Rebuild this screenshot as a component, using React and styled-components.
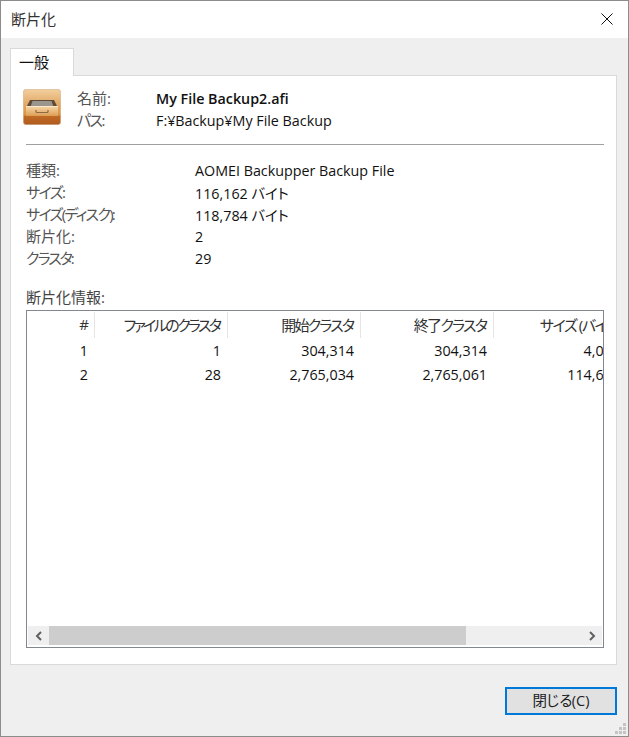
import React from "react";
import styled, { createGlobalStyle } from "styled-components";

const columns = [
  { title: "#", width: 68, tracking: 0 },
  { title: "ファイルのクラスタ", width: 133, tracking: -2.6 },
  { title: "開始クラスタ", width: 133, tracking: -1.8 },
  { title: "終了クラスタ", width: 133, tracking: -1.7 },
  { title: "サイズ (バイト)", width: 133, tracking: -1.4 },
];

const rows = [
  ["1", "1", "304,314", "304,314", "4,096"],
  ["2", "28", "2,765,034", "2,765,061", "114,688"],
];

const details = [
  { label: "種類:", value: "AOMEI Backupper Backup File", tracking: 0 },
  { label: "サイズ:", value: "116,162 バイト", tracking: -1.6 },
  { label: "サイズ(ディスク):", value: "118,784 バイト", tracking: -1.7 },
  { label: "断片化:", value: "2", tracking: 0 },
  { label: "クラスタ:", value: "29", tracking: -2 },
];

const DrawerIcon = () => (
  <IconBox width="38" height="36" viewBox="0 0 38 36">
    <defs>
      <linearGradient id="body" x1="0" y1="0" x2="0" y2="1">
        <stop offset="0" stopColor="#f2cf9f" />
        <stop offset="0.4" stopColor="#e3aa68" />
        <stop offset="0.72" stopColor="#d99344" />
        <stop offset="0.76" stopColor="#c06a26" />
        <stop offset="1" stopColor="#b05a1e" />
      </linearGradient>
      <linearGradient id="front" x1="0" y1="0" x2="0" y2="1">
        <stop offset="0" stopColor="#f7d8a8" />
        <stop offset="1" stopColor="#dd9d54" />
      </linearGradient>
    </defs>
    <rect x="0.3" y="0.3" width="37.4" height="35.4" rx="3" fill="url(#body)" stroke="#cdb08d" strokeWidth="0.6" />
    <path d="M7 11h24l3.5 7h-31z" fill="#5f4a36" />
    <path d="M9.5 12h19l2 6h-23z" fill="#9b968d" />
    <rect x="3" y="17" width="32" height="10" fill="url(#front)" />
    <rect x="3" y="17" width="32" height="1" fill="#fbe8ca" />
    <path d="M13 21v1.5a1 1 0 0 0 1 1h10a1 1 0 0 0 1-1V21" fill="none" stroke="#8d6a45" strokeWidth="1.2" />
  </IconBox>
);

const App = () => (
  <>
    <GlobalStyle />
    <Window>
      <TitleBar>
        <Title>断片化</Title>
        <CloseIcon width="12" height="12" viewBox="0 0 12 12">
          <path d="M0.5 0.5l11 11M11.5 0.5l-11 11" stroke="#111" strokeWidth="1" fill="none" />
        </CloseIcon>
      </TitleBar>
      <Client>
        <Tabs>
          <Tab>一般</Tab>
        </Tabs>
        <Panel>
          <FileHeader>
            <DrawerIcon />
            <FileInfo>
              <FileRow>
                <FileLabel>名前:</FileLabel>
                <FileName>My File Backup2.afi</FileName>
              </FileRow>
              <FileRow>
                <FileLabel $tracking={-1.6}>パス:</FileLabel>
                <span>F:¥Backup¥My File Backup</span>
              </FileRow>
            </FileInfo>
          </FileHeader>
          <Divider />
          <Details>
            {details.map((d) => (
              <DetailRow key={d.label}>
                <DetailLabel $tracking={d.tracking}>{d.label}</DetailLabel>
                <span>{d.value}</span>
              </DetailRow>
            ))}
          </Details>
          <SectionLabel>断片化情報:</SectionLabel>
          <ListView>
            <ListBody>
              <HeaderRow>
                {columns.map((c) => (
                  <HeaderCell key={c.title} $width={c.width} $tracking={c.tracking}>
                    {c.title}
                  </HeaderCell>
                ))}
              </HeaderRow>
              {rows.map((row) => (
                <DataRow key={row[0]}>
                  {row.map((v, i) => (
                    <DataCell key={i} $width={columns[i].width}>
                      {v}
                    </DataCell>
                  ))}
                </DataRow>
              ))}
            </ListBody>
            <ScrollBar>
              <ScrollButton>
                <svg width="8" height="10" viewBox="0 0 8 10">
                  <path d="M6 1L2 5l4 4" fill="none" stroke="#606060" strokeWidth="2" />
                </svg>
              </ScrollButton>
              <ScrollTrack>
                <ScrollThumb />
              </ScrollTrack>
              <ScrollButton>
                <svg width="8" height="10" viewBox="0 0 8 10">
                  <path d="M2 1l4 4-4 4" fill="none" stroke="#606060" strokeWidth="2" />
                </svg>
              </ScrollButton>
            </ScrollBar>
          </ListView>
        </Panel>
        <Footer>
          <CloseButton>
            <ButtonKana>閉じる</ButtonKana>(C)
          </CloseButton>
        </Footer>
      </Client>
      <Grip width="12" height="12" viewBox="0 0 12 12">
        <path d="M8 0h3v3H8zM4 4h3v3H4zM8 4h3v3H8zM0 8h3v3H0zM4 8h3v3H4zM8 8h3v3H8z" fill="#c4c4c4" />
      </Grip>
    </Window>
  </>
);

const GlobalStyle = createGlobalStyle`
  html, body {
    margin: 0;
    padding: 0;
    background: #efefef;
  }
  * {
    box-sizing: border-box;
  }
`;

const Window = styled.div`
  position: relative;
  width: 629px;
  height: 737px;
  display: flex;
  flex-direction: column;
  border: 1px solid #8c8c8c;
  background: #efefef;
  color: #111;
  font-family: "Open Sans", "Noto Sans CJK JP", sans-serif;
  font-size: 14.3px;
  font-feature-settings: "palt";
`;

const TitleBar = styled.div`
  height: 37px;
  flex: none;
  display: flex;
  align-items: center;
  justify-content: space-between;
  padding: 0 15px 1px 10px;
  background: #fff;
`;

const Title = styled.span`
  font-size: 15px;
  color: #333;
  padding-bottom: 2px;
  font-feature-settings: normal;
`;

const CloseIcon = styled.svg`
  display: block;
`;

const Client = styled.div`
  flex: 1;
  display: flex;
  flex-direction: column;
  padding: 10px 11px 0 9px;
`;

const Tabs = styled.div`
  display: flex;
  height: 27px;
  flex: none;
`;

const Tab = styled.div`
  width: 64px;
  height: 28px;
  padding: 2px 0 0 8px;
  background: #fff;
  border: 1px solid #d9d9d9;
  border-bottom: none;
  position: relative;
  z-index: 1;
  font-size: 15px;
  font-feature-settings: normal;
`;

const Panel = styled.div`
  height: 590px;
  flex: none;
  padding: 12px 12px 15px 12px;
  display: flex;
  flex-direction: column;
  background: #fff;
  border: 1px solid #d9d9d9;
`;

const FileHeader = styled.div`
  display: flex;
  align-items: flex-start;
  height: 43px;
  flex: none;
  gap: 16px;
`;

const IconBox = styled.svg`
  display: block;
  flex: none;
  margin-top: 1px;
`;

const FileInfo = styled.div`
  display: flex;
  flex-direction: column;
  margin-top: -1px;
`;

const FileRow = styled.div`
  display: flex;
  align-items: center;
  height: 22px;
`;

const FileLabel = styled.span`
  width: 79px;
  padding-bottom: 2px;
  font-size: 15px;
  letter-spacing: ${(p) => p.$tracking || 0}px;
  color: #555;
`;

const FileName = styled.span`
  font-weight: 600;
`;

const Divider = styled.div`
  height: 1px;
  flex: none;
  background: #a0a0a0;
  margin: 13px 0 14px 3px;
`;

const Details = styled.div`
  display: flex;
  flex-direction: column;
  margin-left: 3px;
`;

const DetailRow = styled.div`
  display: flex;
  align-items: center;
  height: 22px;
`;

const DetailLabel = styled.span`
  width: 169px;
  padding-bottom: 2px;
  font-size: 15px;
  letter-spacing: ${(p) => p.$tracking}px;
  color: #555;
`;

const SectionLabel = styled.div`
  height: 22px;
  margin: 17px 0 0 3px;
  padding-bottom: 2px;
  display: flex;
  align-items: center;
  font-size: 15px;
  color: #444;
`;

const ListView = styled.div`
  width: 578px;
  height: 338px;
  margin: 2px 0 0 3px;
  flex: none;
  display: flex;
  flex-direction: column;
  border: 1px solid #828790;
  background: #fff;
`;

const ListBody = styled.div`
  flex: 1;
  overflow: hidden;
`;

const HeaderRow = styled.div`
  display: flex;
  height: 27px;
  padding-top: 1px;
  white-space: nowrap;
`;

const HeaderCell = styled.div`
  width: ${(p) => p.$width}px;
  flex: none;
  display: flex;
  align-items: center;
  justify-content: flex-end;
  padding: 0 ${(p) => 5 - p.$tracking}px 2px 0;
  border-right: 1px solid #e5e5e5;
  font-size: 15px;
  letter-spacing: ${(p) => p.$tracking}px;
  color: #333;
  overflow: hidden;
`;

const DataRow = styled.div`
  display: flex;
  align-items: center;
  height: 24px;
  white-space: nowrap;
`;

const DataCell = styled.div`
  width: ${(p) => p.$width}px;
  flex: none;
  text-align: right;
  padding-right: 7px;
`;

const ScrollBar = styled.div`
  flex: none;
  height: 19px;
  margin: 0 1px 2px 1px;
  display: flex;
  background: #efefef;
`;

const ScrollButton = styled.div`
  width: 21px;
  flex: none;
  display: flex;
  align-items: center;
  justify-content: center;
`;

const ScrollTrack = styled.div`
  flex: 1;
`;

const ScrollThumb = styled.div`
  width: 417px;
  height: 100%;
  background: #cdcdcd;
`;

const Footer = styled.div`
  flex: 1;
  display: flex;
  justify-content: flex-end;
  align-items: flex-start;
  padding-top: 22px;
`;

const CloseButton = styled.button`
  width: 112px;
  height: 28px;
  padding: 0 0 3px;
  font-family: inherit;
  font-size: 14.5px;
  color: #222;
  background: #e1e1e1;
  border: 2px solid #0078d7;
`;

const ButtonKana = styled.span`
  letter-spacing: -1.4px;
`;

const Grip = styled.svg`
  position: absolute;
  right: 1px;
  bottom: 1px;
`;

export default App;
